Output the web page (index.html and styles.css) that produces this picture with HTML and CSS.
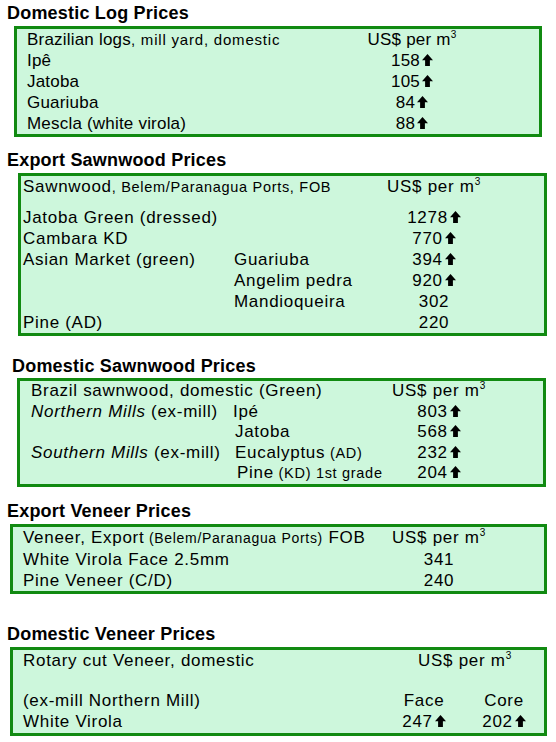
FILE: index.html
```html
<!DOCTYPE html>
<html>
<head>
<meta charset="utf-8">
<title>Brazil Timber Prices</title>
<link rel="stylesheet" href="styles.css">
</head>
<body>
<div class="page">

<section class="sec sec-1">
  <h2 class="title">Domestic Log Prices</h2>
  <div class="box box-1">
    <div class="row"><span>Brazilian logs<span class="sm">, mill yard, domestic</span></span><span class="val">US$ per m<sup class="sup">3</sup></span></div>
    <div class="row"><span>Ipê</span><span class="val">158<svg class="up" viewBox="0 0 11 12"><path d="M5.5 0L11 6.2H7.9V12H3.1V6.2H0Z"/></svg></span></div>
    <div class="row"><span>Jatoba</span><span class="val">105<svg class="up" viewBox="0 0 11 12"><path d="M5.5 0L11 6.2H7.9V12H3.1V6.2H0Z"/></svg></span></div>
    <div class="row"><span>Guariuba</span><span class="val">84<svg class="up" viewBox="0 0 11 12"><path d="M5.5 0L11 6.2H7.9V12H3.1V6.2H0Z"/></svg></span></div>
    <div class="row"><span>Mescla (white virola)</span><span class="val">88<svg class="up" viewBox="0 0 11 12"><path d="M5.5 0L11 6.2H7.9V12H3.1V6.2H0Z"/></svg></span></div>
  </div>
</section>

<section class="sec sec-2">
  <h2 class="title">Export Sawnwood Prices</h2>
  <div class="box box-2">
    <div class="row"><span class="span2">Sawnwood<span class="sm">, Belem/Paranagua Ports, FOB</span></span><span class="val">US$ per m<sup class="sup">3</sup></span></div>
    <div class="spacer spacer-9"></div>
    <div class="row"><span class="span2">Jatoba Green (dressed)</span><span class="val">1278<svg class="up" viewBox="0 0 11 12"><path d="M5.5 0L11 6.2H7.9V12H3.1V6.2H0Z"/></svg></span></div>
    <div class="row"><span class="span2">Cambara KD</span><span class="val">770<svg class="up" viewBox="0 0 11 12"><path d="M5.5 0L11 6.2H7.9V12H3.1V6.2H0Z"/></svg></span></div>
    <div class="row"><span>Asian Market (green)</span><span>Guariuba</span><span class="val">394<svg class="up" viewBox="0 0 11 12"><path d="M5.5 0L11 6.2H7.9V12H3.1V6.2H0Z"/></svg></span></div>
    <div class="row"><span></span><span>Angelim pedra</span><span class="val">920<svg class="up" viewBox="0 0 11 12"><path d="M5.5 0L11 6.2H7.9V12H3.1V6.2H0Z"/></svg></span></div>
    <div class="row"><span></span><span>Mandioqueira</span><span class="val">302</span></div>
    <div class="row"><span class="span2">Pine (AD)</span><span class="val">220</span></div>
  </div>
</section>

<section class="sec sec-3">
  <h2 class="title">Domestic Sawnwood Prices</h2>
  <div class="box box-3">
    <div class="row"><span class="span2">Brazil sawnwood, domestic (Green)</span><span class="val">US$ per m<sup class="sup">3</sup></span></div>
    <div class="row"><span><i>Northern Mills</i> (ex-mill)</span><span>Ipé</span><span class="val">803<svg class="up" viewBox="0 0 11 12"><path d="M5.5 0L11 6.2H7.9V12H3.1V6.2H0Z"/></svg></span></div>
    <div class="row"><span></span><span class="sub-2">Jatoba</span><span class="val">568<svg class="up" viewBox="0 0 11 12"><path d="M5.5 0L11 6.2H7.9V12H3.1V6.2H0Z"/></svg></span></div>
    <div class="row"><span><i>Southern Mills</i> (ex-mill)</span><span class="sub-2">Eucalyptus<span class="sm"> (AD)</span></span><span class="val">232<svg class="up" viewBox="0 0 11 12"><path d="M5.5 0L11 6.2H7.9V12H3.1V6.2H0Z"/></svg></span></div>
    <div class="row"><span></span><span class="sub-4">Pine<span class="sm"> (KD) 1st grade</span></span><span class="val">204<svg class="up" viewBox="0 0 11 12"><path d="M5.5 0L11 6.2H7.9V12H3.1V6.2H0Z"/></svg></span></div>
  </div>
</section>

<section class="sec sec-4">
  <h2 class="title">Export Veneer Prices</h2>
  <div class="box box-4">
    <div class="row"><span>Veneer, Export<span class="sm"> (Belem/Paranagua Ports)</span> FOB</span><span class="val">US$ per m<sup class="sup">3</sup></span></div>
    <div class="row"><span>White Virola Face 2.5mm</span><span class="val">341</span></div>
    <div class="row"><span>Pine Veneer (C/D)</span><span class="val">240</span></div>
  </div>
</section>

<section class="sec sec-5">
  <h2 class="title">Domestic Veneer Prices</h2>
  <div class="box box-5">
    <div class="row"><span>Rotary cut Veneer, domestic</span><span class="val span-vals">US$ per m<sup class="sup">3</sup></span></div>
    <div class="spacer spacer-19"></div>
    <div class="row"><span>(ex-mill Northern Mill)</span><span class="val">Face</span><span class="val">Core</span></div>
    <div class="row"><span>White Virola</span><span class="val">247<svg class="up" viewBox="0 0 11 12"><path d="M5.5 0L11 6.2H7.9V12H3.1V6.2H0Z"/></svg></span><span class="val">202<svg class="up" viewBox="0 0 11 12"><path d="M5.5 0L11 6.2H7.9V12H3.1V6.2H0Z"/></svg></span></div>
  </div>
</section>

</div>
</body>
</html>
```

FILE: styles.css
```css
html, body {
  margin: 0;
  padding: 0;
  background: #ffffff;
}

body {
  font-family: "Liberation Sans", Arial, sans-serif;
  color: #000000;
}

.page {
  padding-top: 3px;
  display: flex;
  flex-direction: column;
}

.title {
  margin: 0;
  font-size: 18px;
  font-weight: bold;
  line-height: 20px;
  letter-spacing: 0.2px;
}

.box {
  box-sizing: border-box;
  border: 3px solid #118a11;
  background: #cdf7dc;
  font-size: 17px;
  line-height: 21px;
  letter-spacing: 0.7px;
}

.row {
  display: grid;
  white-space: nowrap;
}

.spacer-9 { height: 9px; }
.spacer-19 { height: 19px; }

.sm { font-size: 14.5px; }

.val {
  text-align: center;
  white-space: nowrap;
}

.sup {
  font-size: 10px;
  line-height: 0;
  vertical-align: 7px;
}

.up {
  width: 11px;
  height: 12px;
  margin-left: 2px;
  fill: #000000;
}

.span2 { grid-column: 1 / span 2; }
.span-vals { grid-column: 2 / span 2; }
.sub-2 { padding-left: 2px; }
.sub-4 { padding-left: 4px; }

/* section 1 */
.sec-1 .title { padding-left: 7px; }
.box-1 {
  margin: 3px 0 0 14px;
  width: 528px;
  padding-left: 10px;
  letter-spacing: 0.2px;
}
.box-1 .sm {
  font-size: 15px;
  letter-spacing: 0.8px;
}
.box-1 .row { grid-template-columns: 325px 120px; }

/* section 2 */
.sec-2 { margin-top: 13px; }
.sec-2 .title { padding-left: 7px; }
.box-2 {
  margin: 3px 0 0 18px;
  width: 529px;
  padding-left: 2px;
}
.box-2 .row { grid-template-columns: 211px 140px 120px; }

/* section 3 */
.sec-3 { margin-top: 20px; }
.sec-3 .title { padding-left: 12px; }
.box-3 {
  margin: 2px 0 0 17px;
  width: 529px;
  padding-left: 11px;
  line-height: 20.6px;
}
.box-3 .row { grid-template-columns: 202px 146px 120px; }

/* section 4 */
.sec-4 { margin-top: 14px; }
.sec-4 .title { padding-left: 7px; }
.box-4 {
  margin: 3px 0 0 10px;
  width: 537px;
  padding-left: 10px;
}
.box-4 .sm { font-size: 14px; }
.box-4 .row { grid-template-columns: 356px 120px; }

/* section 5 */
.sec-5 { margin-top: 30px; }
.sec-5 .title { padding-left: 7px; }
.box-5 {
  margin: 3px 0 0 10px;
  width: 537px;
  padding-left: 10px;
  padding-bottom: 1px;
}
.box-5 .row { grid-template-columns: 362px 78px 82px; }
```
